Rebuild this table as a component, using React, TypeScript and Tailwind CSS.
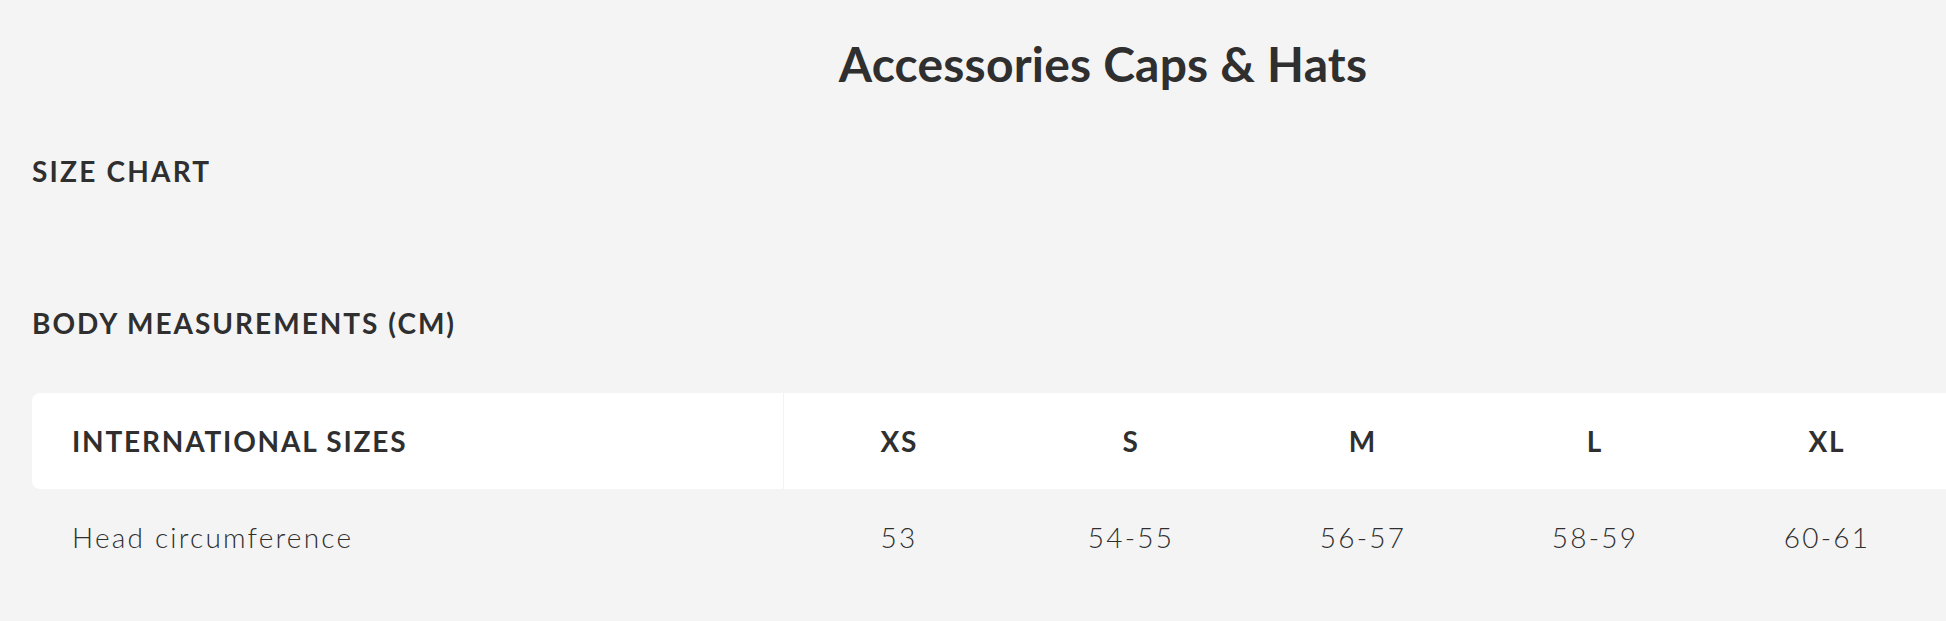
const sizes = [
  { label: "XS", head: "53" },
  { label: "S", head: "54-55" },
  { label: "M", head: "56-57" },
  { label: "L", head: "58-59" },
  { label: "XL", head: "60-61" },
  { label: "XXL", head: "62-63" },
];

export default function App() {
  return (
    <div className="w-full min-h-screen overflow-hidden bg-[#f4f4f4] text-[#2f2f2f] font-['Lato',sans-serif]">
      <div className="w-[2206px] px-8 pt-[34px] pb-10">
        {/* Title */}
        <h1 className="text-center text-[48px] font-bold leading-[60px] tracking-[0.2px]">
          Accessories Caps &amp; Hats
        </h1>

        {/* Size chart heading */}
        <h2 className="mt-[60px] text-[28px] font-bold uppercase leading-[34px] tracking-[2.2px]">
          Size Chart
        </h2>

        {/* Body measurements */}
        <h3 className="mt-[118px] text-[28px] font-bold uppercase leading-[34px] tracking-[2px]">
          Body Measurements (cm)
        </h3>

        <table className="mt-[53px] w-full border-collapse table-fixed">
          <thead>
            <tr className="bg-white h-[96px]">
              <th className="w-[751px] rounded-l-lg pl-10 text-left text-[28px] leading-[34px] font-bold uppercase tracking-[1.8px] border-r border-[#f3f3f3]">
                International Sizes
              </th>
              {sizes.map((s) => (
                <th
                  key={s.label}
                  className="w-[232px] text-center text-[28px] leading-[34px] font-bold tracking-[1.8px]"
                >
                  {s.label}
                </th>
              ))}
            </tr>
          </thead>
          <tbody>
            <tr className="h-[96px]">
              <td className="pl-10 text-left text-[28px] leading-[34px] font-light tracking-[2.2px]">
                Head circumference
              </td>
              {sizes.map((s) => (
                <td
                  key={s.label}
                  className="text-center text-[28px] leading-[34px] font-light tracking-[2.2px]"
                >
                  {s.head}
                </td>
              ))}
            </tr>
          </tbody>
        </table>
      </div>
    </div>
  );
}
